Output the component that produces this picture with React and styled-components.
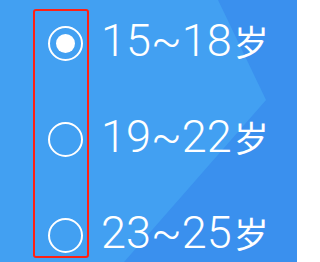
import React, { useState } from "react";
import styled, { createGlobalStyle } from "styled-components";

const GlobalStyle = createGlobalStyle`
  html, body {
    margin: 0;
    padding: 0;
  }
  body {
    font-family: Roboto, "Noto Sans CJK SC", sans-serif;
  }
`;

const ages = [
  { range: "15~18", unit: "岁" },
  { range: "19~22", unit: "岁" },
  { range: "23~25", unit: "岁" },
];

const App = () => {
  const [selected, setSelected] = useState(0);
  return (
    <>
      <GlobalStyle />
      <Page>
        <RadioColumn>
          {ages.map((age, i) => (
            <Radio
              key={age.range}
              role="radio"
              aria-checked={selected === i}
              checked={selected === i}
              onClick={() => setSelected(i)}
            />
          ))}
        </RadioColumn>
        <LabelColumn>
          {ages.map((age, i) => (
            <Label key={age.range} onClick={() => setSelected(i)}>
              {age.range}
              <Unit>{age.unit}</Unit>
            </Label>
          ))}
        </LabelColumn>
      </Page>
    </>
  );
};

export default App;

const Page = styled.div`
  position: relative;
  display: flex;
  align-items: flex-start;
  width: 297px;
  height: 262px;
  box-sizing: border-box;
  padding: 9px 0 0 33px;
  overflow: hidden;
  background: #3a90ee;

  &::before {
    content: "";
    position: absolute;
    inset: 0;
    background: #42a0f2;
    clip-path: polygon(0 0, 218px 0, 266px 100px, 124px 262px, 0 262px);
  }
`;

const RadioColumn = styled.div`
  position: relative;
  display: flex;
  flex-direction: column;
  gap: 61px;
  width: 56px;
  height: 249px;
  box-sizing: border-box;
  padding: 15px 0 0 13px;
  border: 2px solid #ff2114;
  border-radius: 3px;
`;

const Radio = styled.div`
  position: relative;
  width: 35px;
  height: 35px;
  box-sizing: border-box;
  border: 2px solid #ffffff;
  border-radius: 50%;
  cursor: pointer;

  &::after {
    content: "";
    position: absolute;
    top: 6px;
    left: 6px;
    width: 19px;
    height: 19px;
    border-radius: 50%;
    background: #ffffff;
    display: ${props => (props.checked ? "block" : "none")};
  }
`;

const LabelColumn = styled.div`
  position: relative;
  display: flex;
  flex-direction: column;
  gap: 48px;
  padding: 8px 0 0 12px;
`;

const Label = styled.div`
  display: flex;
  align-items: center;
  height: 48px;
  font-size: 45px;
  font-weight: 300;
  line-height: 48px;
  color: #ffffff;
  white-space: nowrap;
  cursor: pointer;
`;

const Unit = styled.span`
  margin-left: 2px;
  font-family: "Noto Sans CJK SC", sans-serif;
  font-size: 35px;
  font-weight: 400;
  line-height: 48px;
`;
